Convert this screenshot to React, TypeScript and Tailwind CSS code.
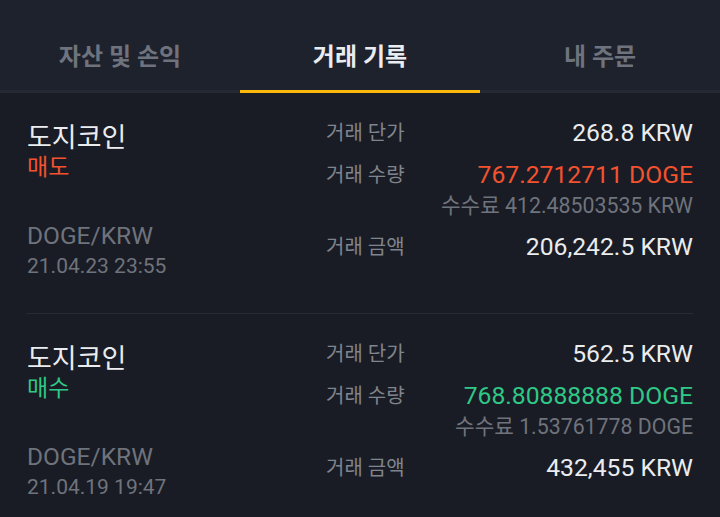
import React from "react";

type Trade = {
  side: "매도" | "매수";
  pair: string;
  date: string;
  price: string;
  qty: string;
  fee: string;
  total: string;
};

const trades: Trade[] = [
  {
    side: "매도",
    pair: "DOGE/KRW",
    date: "21.04.23 23:55",
    price: "268.8 KRW",
    qty: "767.2712711 DOGE",
    fee: "수수료 412.48503535 KRW",
    total: "206,242.5 KRW",
  },
  {
    side: "매수",
    pair: "DOGE/KRW",
    date: "21.04.19 19:47",
    price: "562.5 KRW",
    qty: "768.80888888 DOGE",
    fee: "수수료 1.53761778 DOGE",
    total: "432,455 KRW",
  },
];

const font = { fontFamily: 'Roboto, "Noto Sans CJK KR", sans-serif' };

function TradeCard({ t }: { t: Trade }) {
  const sell = t.side === "매도";
  return (
    <div>
      <div className="flex justify-between px-[27px] pt-[25px] pb-[32px]">
        <div className="flex flex-col mt-[5px]">
          <div className="text-[27px] leading-[30px] text-[#eaecef]">도지코인</div>
          <div
            className={
              sell
                ? "text-[23px] leading-[30px] text-[#f3522f]"
                : "text-[23px] leading-[30px] text-[#2fc886]"
            }
          >
            {t.side}
          </div>
          <div className="mt-[38px] text-[24.5px] leading-[30px] text-[#6f737c]">{t.pair}</div>
          <div className="text-[21px] leading-[30px] text-[#6f737c]">{t.date}</div>
        </div>
        <div className="flex flex-col w-[367px]">
          <div className="flex justify-between items-center h-[30px]">
            <span className="text-[20px] text-[#80848c]">거래 단가</span>
            <span className="text-[24.7px] text-[#eaecef]">{t.price}</span>
          </div>
          <div className="flex justify-between items-center h-[30px] mt-[12px]">
            <span className="text-[20px] text-[#80848c]">거래 수량</span>
            <span className={sell ? "text-[24.7px] text-[#f3522f]" : "text-[24.7px] text-[#2fc886]"}>
              {t.qty}
            </span>
          </div>
          <div className="flex justify-end items-center h-[26px] mt-[3px]">
            <span className="text-[21.3px] text-[#6f737c]">{t.fee}</span>
          </div>
          <div className="flex justify-between items-center h-[30px] mt-[13px]">
            <span className="text-[20px] text-[#80848c]">거래 금액</span>
            <span className="text-[24.7px] text-[#eaecef]">{t.total}</span>
          </div>
        </div>
      </div>
      <div className="ml-[26px] mr-[27px] h-px bg-[#262a33]" />
    </div>
  );
}

export default function App() {
  const tabs = ["자산 및 손익", "거래 기록", "내 주문"];
  return (
    <div className="w-[720px] h-[517px] overflow-hidden bg-[#191c24]" style={font}>
      <div className="bg-[#1e222d]">
        <div className="grid grid-cols-3">
          {tabs.map((tab, i) => (
            <div key={tab} className="flex flex-col">
              <div
                className={
                  i === 1
                    ? "h-[90px] pt-[42px] text-center text-[24px] leading-[30px] font-bold text-[#eaecef]"
                    : "h-[90px] pt-[42px] text-center text-[24px] leading-[30px] font-bold text-[#6f737d]"
                }
              >
                {tab}
              </div>
              <div className={i === 1 ? "h-[3px] bg-[#fcb80a]" : "h-[3px] bg-[#252933]"} />
            </div>
          ))}
        </div>
      </div>
      {trades.map((t, i) => (
        <TradeCard key={i} t={t} />
      ))}
    </div>
  );
}
